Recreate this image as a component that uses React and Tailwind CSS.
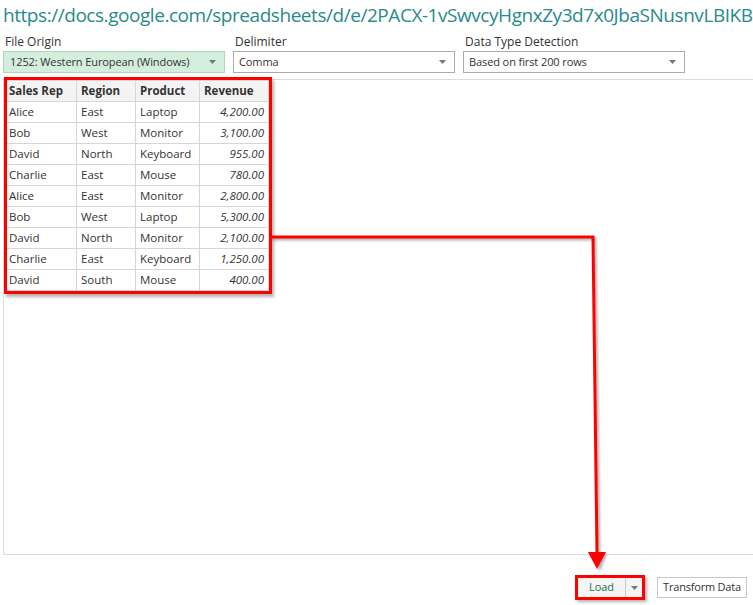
import React from "react";

const rows = [
  ["Alice", "East", "Laptop", "4,200.00"],
  ["Bob", "West", "Monitor", "3,100.00"],
  ["David", "North", "Keyboard", "955.00"],
  ["Charlie", "East", "Mouse", "780.00"],
  ["Alice", "East", "Monitor", "2,800.00"],
  ["Bob", "West", "Laptop", "5,300.00"],
  ["David", "North", "Monitor", "2,100.00"],
  ["Charlie", "East", "Keyboard", "1,250.00"],
  ["David", "South", "Mouse", "400.00"],
];

function Caret() {
  return (
    <svg width="7" height="4" viewBox="0 0 7 4" className="shrink-0">
      <path d="M0 0 L7 0 L3.5 4 Z" fill="#777" />
    </svg>
  );
}

function Field({ label, value, green }) {
  return (
    <div className="w-[222px] flex flex-col">
      <div className="text-[12px] leading-[16px] text-[#333] h-[16px] mb-[1px] pl-[2px] whitespace-nowrap">{label}</div>
      <div
        className={
          green
            ? "h-[22px] border border-[#a8d8b8] bg-[#d4eedd] flex items-center justify-between pl-[6px] pr-[8px] text-[11px] tracking-[-0.1px] text-[#333] whitespace-nowrap"
            : "h-[22px] border border-[#ababab] bg-white flex items-center justify-between pl-[5px] pr-[8px] text-[11px] tracking-[-0.1px] text-[#333] whitespace-nowrap"
        }
      >
        <span>{value}</span>
        <Caret />
      </div>
    </div>
  );
}

export default function App() {
  return (
    <div
      className="relative w-[753px] h-[605px] overflow-hidden bg-white"
      style={{ fontFamily: '"Segoe UI", "Open Sans", "Noto Sans", sans-serif' }}
    >
      <div className="pl-[3px] pt-[1px] h-[33px] text-[19px] leading-[28px] text-[#2a8a8c] whitespace-nowrap tracking-[-0.45px]">
        https://docs.google.com/spreadsheets/d/e/2PACX-1vSwvcyHgnxZy3d7x0JbaSNusnvLBIKB5
      </div>

      <div className="flex gap-[8px] pl-[3px] mt-[1px]">
        <Field label="File Origin" value="1252: Western European (Windows)" green />
        <Field label="Delimiter" value="Comma" />
        <Field label="Data Type Detection" value="Based on first 200 rows" />
      </div>

      <div className="ml-[3px] mt-[6px] h-[476px] border-l border-t border-b border-[#dcdcdc] relative">
        <div className="relative inline-block ml-[1px]">
          <table className="border-collapse text-[11.5px] text-[#333]">
            <thead>
              <tr className="bg-[#f3f3f3] h-[21px]">
                <th className="w-[71px] text-left font-bold border border-[#d6d6d6] pl-[3px]">Sales Rep</th>
                <th className="w-[59px] text-left font-bold border border-[#d6d6d6] pl-[4px]">Region</th>
                <th className="w-[64px] text-left font-bold border border-[#d6d6d6] pl-[4px]">Product</th>
                <th className="w-[69px] text-left font-bold border border-[#d6d6d6] pl-[4px]">Revenue</th>
              </tr>
            </thead>
            <tbody>
              {rows.map((r, i) => (
                <tr key={i} className="h-[21px]">
                  <td className="border border-[#d6d6d6] pl-[3px]">{r[0]}</td>
                  <td className="border border-[#d6d6d6] pl-[4px]">{r[1]}</td>
                  <td className="border border-[#d6d6d6] pl-[4px]">{r[2]}</td>
                  <td className="border border-[#d6d6d6] pr-[4px] text-right italic">{r[3]}</td>
                </tr>
              ))}
            </tbody>
          </table>
          <div className="absolute left-[-1px] top-[-3px] right-[-3px] bottom-[-3px] border-[3px] border-[#ff0000] shadow-[2px_3px_3px_rgba(0,0,0,0.3)] pointer-events-none" />
        </div>
      </div>

      <div className="flex justify-end items-center pr-[6px] mt-[22px] gap-[14px]">
        <div className="relative flex h-[21px] border border-[#c8c8c8] bg-[#f4f4f4]">
          <div className="w-[47px] flex items-center justify-center text-[11px] text-[#217346]">Load</div>
          <div className="w-[17px] border-l border-[#c8c8c8] flex items-center justify-center">
            <Caret />
          </div>
          <div className="absolute left-[-3px] top-[-3px] right-[-3px] bottom-[-3px] border-[3px] border-[#ff0000] shadow-[2px_2px_3px_rgba(0,0,0,0.3)]" />
        </div>
        <div className="h-[21px] w-[90px] border border-[#c6c6c6] bg-white flex items-center justify-center text-[11px] tracking-[-0.2px] text-[#333] whitespace-nowrap">
          Transform Data
        </div>
      </div>

      <svg className="absolute inset-0 pointer-events-none" width="753" height="605">
        <defs>
          <filter id="blur" x="-10%" y="-10%" width="120%" height="120%">
            <feGaussianBlur stdDeviation="1.2" />
          </filter>
        </defs>
        <g filter="url(#blur)" opacity="0.45">
          <polyline points="272,239 595,239 599,558" fill="none" stroke="#555" strokeWidth="3" />
          <polygon points="589,554 607,554 600,571" fill="#555" />
        </g>
        <polyline points="272,237 593,237 597,554" fill="none" stroke="#ff0000" strokeWidth="3" />
        <polygon points="588,552 606,552 597,569" fill="#ff0000" />
      </svg>
    </div>
  );
}
